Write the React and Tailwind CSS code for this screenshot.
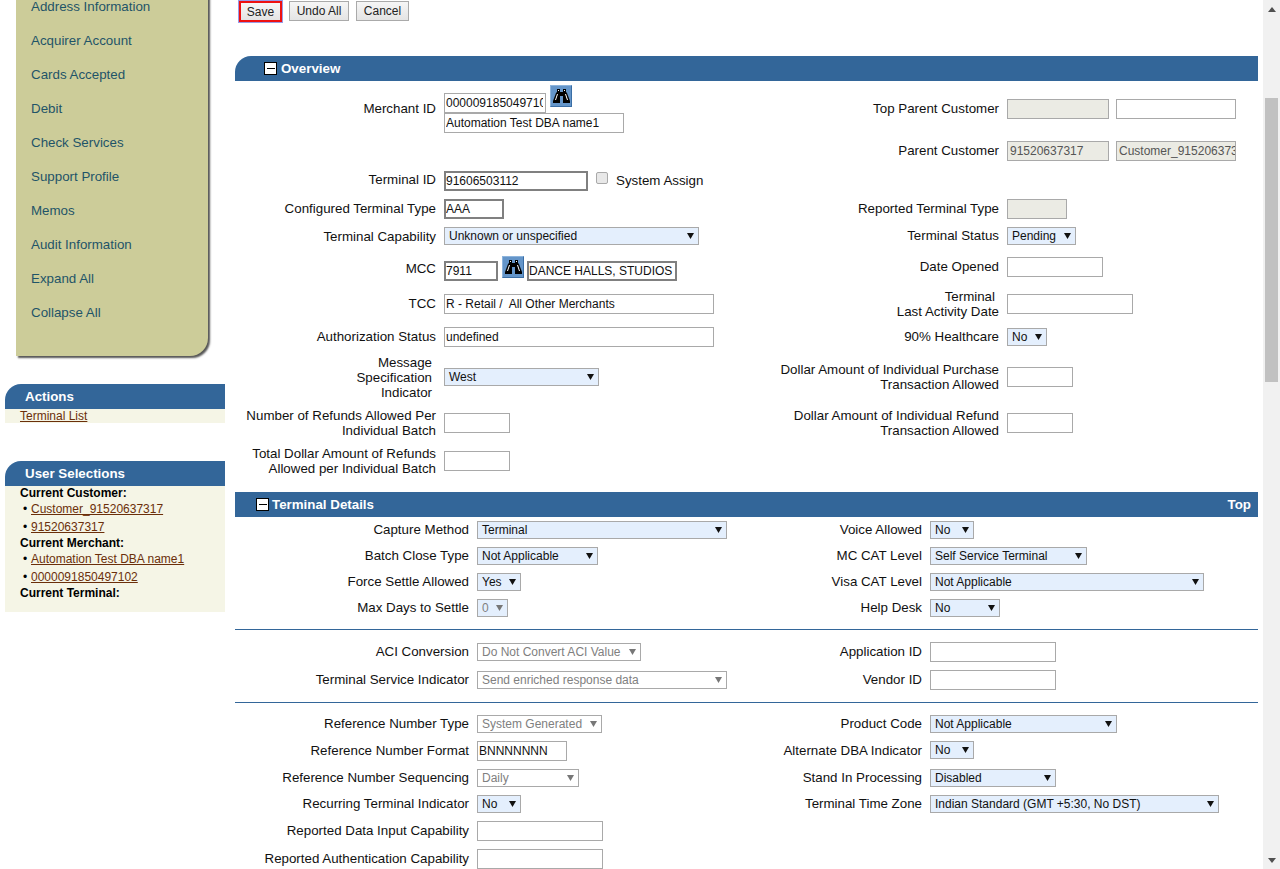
import React from "react";

const Caret = ({ dim }) => (
  <svg width="7" height="6" viewBox="0 0 7 6" className="shrink-0">
    <path d="M0 0h7L3.5 6z" fill={dim ? "#777" : "#111"} />
  </svg>
);

const Sel = ({ w, children, dim, plain }) => (
  <div className={`${w} h-[18px] shrink-0 flex items-center justify-between border border-[#a9a9a9] pl-[4px] pr-[4px] text-[12px] whitespace-nowrap overflow-hidden ${plain ? "bg-white" : "bg-[#e4effd]"} ${dim ? "text-[#808080]" : "text-[#111]"}`}>
    <span>{children}</span>
    <Caret dim={dim} />
  </div>
);

const Inp = ({ w, children, thick, dis }) => (
  <div className={`${w} h-[20px] shrink-0 flex items-center text-[12px] whitespace-nowrap overflow-hidden ${thick ? "border-2 border-[#808080] pl-0 pr-[1px]" : dis ? "border border-[#a9a9a9] pl-[2px] pr-0" : "border border-[#a9a9a9] pl-[1px] pr-[2px]"} ${dis ? "bg-[#ebebe4] text-[#555]" : "bg-white text-[#111]"}`}>
    <span className="block flex-1 overflow-hidden">{children}</span>
  </div>
);

const Lbl = ({ w, children, cls = "" }) => (
  <div className={`${w} shrink-0 text-right text-[13.33px] leading-[15px] text-[#111] whitespace-nowrap ${cls}`}>{children}</div>
);

const Bino = () => (
  <div className="w-[22px] h-[22px] shrink-0 bg-[#6495c9] border border-t-[#8db4dc] border-l-[#8db4dc] border-b-[#3a6ea5] border-r-[#3a6ea5] flex items-center justify-center">
    <svg width="17" height="14" viewBox="0 0 17 14">
      <path fill="#000" d="M4 0h3v3h3V0h3v3l1 1 3 8v2H10V7H7v7H0v-2l3-8 1-1z" />
      <path fill="none" stroke="#fff" strokeWidth="1" d="M4.5 5L2.5 11M12.5 5l2 6M5 1.5h1M11 1.5h1" />
    </svg>
  </div>
);

const Minus = () => (
  <span className="w-[13px] h-[13px] shrink-0 bg-white border border-black flex items-center justify-center">
    <span className="w-[8px] h-[1px] bg-black" />
  </span>
);

const Row = ({ h, mt = "", children, cls = "items-start" }) => (
  <div className={`flex ${h} ${mt} ${cls}`}>{children}</div>
);

const LeftO = ({ h, mt, label, lblCls = "-mt-[2px]", children }) => (
  <Row h={h} mt={mt} cls="items-center">
    <Lbl w="w-[201px]" cls={lblCls}>{label}</Lbl>
    <div className="ml-[8px] flex items-center">{children}</div>
  </Row>
);

const RightO = ({ h, mt, label, children, lblCls = "-mt-[2px]" }) => (
  <Row h={h} mt={mt} cls="items-center">
    <Lbl w="w-[219px]" cls={lblCls}>{label}</Lbl>
    <div className="ml-[8px] flex items-center">{children}</div>
  </Row>
);

const Pair = ({ h, mt = "", left, lc, right, rc, lp = "" }) => (
  <div className={`flex items-start ${h} ${mt}`}>
    <div className={`w-[234px] shrink-0 text-right text-[13.33px] leading-[17px] text-[#111] ${lp}`}>{left}</div>
    <div className="ml-[8px] w-[323px] shrink-0 flex">{lc}</div>
    {right ? <div className={`w-[122px] shrink-0 text-right text-[13.33px] leading-[17px] text-[#111] whitespace-nowrap flex justify-end ${lp}`}>{right}</div> : null}
    {right ? <div className="ml-[8px] flex">{rc}</div> : null}
  </div>
);

const menu = ["Address Information", "Acquirer Account", "Cards Accepted", "Debit", "Check Services", "Support Profile", "Memos", "Audit Information", "Expand All", "Collapse All"];

const A = ({ children }) => <a className="text-[#6b2f0a] underline underline-offset-1">{children}</a>;

const Bul = ({ children }) => (
  <div className="h-[18px] leading-[16px] pl-[3px] flex">
    <span className="w-[8px] shrink-0">•</span>
    <A>{children}</A>
  </div>
);

function Sidebar() {
  return (
    <aside className="w-[235px] shrink-0 pl-[5px]">
      <nav className="ml-[11px] w-[192px] h-[366px] -mt-[10px] bg-[#cccc99] rounded-br-[18px] shadow-[2px_2px_2px_#555]">
        {menu.map((m) => (
          <div key={m} className="h-[34px] pl-[15px] flex items-center text-[13.33px] text-[#1f5468]">{m}</div>
        ))}
      </nav>
      <section className="mt-[28px] w-[220px]">
        <h3 className="h-[25px] bg-[#336699] rounded-tl-[16px] pl-[20px] flex items-center text-[13.33px] font-bold text-white">Actions</h3>
        <div className="h-[14px] bg-[#f5f5e6] pl-[15px] text-[12px] leading-[14px]"><A>Terminal List</A></div>
      </section>
      <section className="mt-[38px] w-[220px]">
        <h3 className="h-[25px] bg-[#336699] rounded-tl-[16px] pl-[20px] flex items-center text-[13.33px] font-bold text-white">User Selections</h3>
        <div className="h-[126px] bg-[#f5f5e6] pl-[15px] text-[12px] text-black">
          <div className="font-bold h-[15px] leading-[14px]">Current Customer:</div>
          <Bul>Customer_91520637317</Bul>
          <div className="h-[17px]"><Bul>91520637317</Bul></div>
          <div className="font-bold h-[15px] leading-[14px]">Current Merchant:</div>
          <Bul>Automation Test DBA name1</Bul>
          <div className="h-[17px]"><Bul>0000091850497102</Bul></div>
          <div className="font-bold h-[14px] leading-[14px]">Current Terminal:</div>
        </div>
      </section>
    </aside>
  );
}

const Btn = ({ children, w, save }) => (
  <button className={`${w} flex items-center justify-center text-[12px] text-[#222] bg-gradient-to-b from-[#f6f6f6] to-[#e4e4e4] ${save ? "h-[21px] mt-[1px] border-[2px] border-[#ee1111] outline outline-1 outline-[#9a9ae6]" : "h-[20px] mt-[1px] border border-[#aaa]"}`}>{children}</button>
);

function Overview() {
  return (
    <div className="flex h-[411px]">
      <div className="w-[545px] shrink-0">
        <LeftO h="h-[40px]" mt="mt-[12px]" label="Merchant ID" lblCls="-mt-[10px]">
          <div>
            <div className="flex items-start">
              <Inp w="w-[102px]">0000091850497102</Inp>
              <div className="ml-[4px] -mt-[8px]"><Bino /></div>
            </div>
            <Inp w="w-[180px]">Automation Test DBA name1</Inp>
          </div>
        </LeftO>
        <LeftO h="h-[20px]" mt="mt-[38px]" label="Terminal ID" lblCls="-mt-[4px]">
          <Inp w="w-[144px]" thick>91606503112</Inp>
          <span className="ml-[8px] mb-[6px] w-[12px] h-[12px] rounded-[2px] border border-[#a9a9a9] bg-[#e8e8e8]" />
          <span className="ml-[8px] text-[13.33px] text-[#111]">System Assign</span>
        </LeftO>
        <LeftO h="h-[20px]" mt="mt-[8px]" label="Configured Terminal Type"><Inp w="w-[60px]" thick>AAA</Inp></LeftO>
        <LeftO h="h-[18px]" mt="mt-[8px]" label="Terminal Capability" lblCls=""><Sel w="w-[255px]">Unknown or unspecified</Sel></LeftO>
        <LeftO h="h-[20px]" mt="mt-[16px]" label="MCC" lblCls="-mt-[6px]">
          <Inp w="w-[54px]" thick>7911</Inp>
          <div className="ml-[4px] -mt-[8px]"><Bino /></div>
          <div className="ml-[3px]"><Inp w="w-[150px]" thick>DANCE HALLS, STUDIOS</Inp></div>
        </LeftO>
        <LeftO h="h-[20px]" mt="mt-[13px]" label="TCC"><Inp w="w-[270px]">R - Retail /&nbsp; All Other Merchants</Inp></LeftO>
        <LeftO h="h-[20px]" mt="mt-[13px]" label="Authorization Status"><Inp w="w-[270px]">undefined</Inp></LeftO>
        <Row h="h-[44px]" mt="mt-[9px]" cls="items-start">
          <Lbl w="w-[197px]" cls="-mt-[1px]">Message<br />Specification<br />Indicator</Lbl>
          <div className="ml-[12px] mt-[12px]"><Sel w="w-[155px]">West</Sel></div>
        </Row>
        <LeftO h="h-[20px]" mt="mt-[13px]" label={<>Number of Refunds Allowed Per<br />Individual Batch</>} lblCls=""><Inp w="w-[66px]" /></LeftO>
        <LeftO h="h-[20px]" mt="mt-[18px]" label={<>Total Dollar Amount of Refunds<br />Allowed per Individual Batch</>} lblCls=""><Inp w="w-[66px]" /></LeftO>
      </div>
      <div className="flex-1">
        <RightO h="h-[20px]" mt="mt-[18px]" label="Top Parent Customer">
          <Inp w="w-[102px]" dis /><div className="ml-[7px]"><Inp w="w-[120px]" /></div>
        </RightO>
        <RightO h="h-[20px]" mt="mt-[22px]" label="Parent Customer">
          <Inp w="w-[102px]" dis>91520637317</Inp><div className="ml-[7px]"><Inp w="w-[120px]" dis>Customer_91520637317</Inp></div>
        </RightO>
        <RightO h="h-[20px]" mt="mt-[38px]" label="Reported Terminal Type"><Inp w="w-[60px]" dis /></RightO>
        <RightO h="h-[19px]" mt="mt-[7px]" label="Terminal Status" lblCls=""><Sel w="w-[69px]">Pending</Sel></RightO>
        <RightO h="h-[20px]" mt="mt-[12px]" label="Date Opened"><Inp w="w-[96px]" /></RightO>
        <RightO h="h-[20px]" mt="mt-[17px]" label={<><span className="pr-[4px]">Terminal</span><br />Last Activity Date</>} lblCls=""><Inp w="w-[126px]" /></RightO>
        <RightO h="h-[18px]" mt="mt-[14px]" label="90% Healthcare"><Sel w="w-[40px]">No</Sel></RightO>
        <RightO h="h-[20px]" mt="mt-[21px]" label={<>Dollar Amount of Individual Purchase<br />Transaction Allowed</>} lblCls=""><Inp w="w-[66px]" /></RightO>
        <RightO h="h-[20px]" mt="mt-[26px]" label={<>Dollar Amount of Individual Refund<br />Transaction Allowed</>} lblCls=""><Inp w="w-[66px]" /></RightO>
      </div>
    </div>
  );
}

function Details() {
  return (
    <div>
      <div className="pt-[4px]">
        <Pair h="h-[26px]" left="Capture Method" lc={<Sel w="w-[250px]">Terminal</Sel>} right="Voice Allowed" rc={<Sel w="w-[44px]">No</Sel>} />
        <Pair h="h-[26px]" left="Batch Close Type" lc={<Sel w="w-[121px]">Not Applicable</Sel>} right="MC CAT Level" rc={<Sel w="w-[157px]">Self Service Terminal</Sel>} />
        <Pair h="h-[26px]" left="Force Settle Allowed" lc={<Sel w="w-[44px]">Yes</Sel>} right="Visa CAT Level" rc={<Sel w="w-[274px]">Not Applicable</Sel>} />
        <Pair h="h-[18px]" left="Max Days to Settle" lc={<Sel w="w-[31px]" dim>0</Sel>} right="Help Desk" rc={<Sel w="w-[70px]">No</Sel>} />
      </div>
      <hr className="mt-[12px] border-t border-[#336699]" />
      <div className="pt-[13px]">
        <Pair h="h-[28px]" left="ACI Conversion" lc={<Sel w="w-[164px]" dim plain>Do Not Convert ACI Value</Sel>} right="Application ID" rc={<div className="-mt-[1px]"><Inp w="w-[126px]" /></div>} />
        <Pair h="h-[18px]" left="Terminal Service Indicator" lc={<Sel w="w-[250px]" dim plain>Send enriched response data</Sel>} right="Vendor ID" rc={<div className="-mt-[1px]"><Inp w="w-[126px]" /></div>} />
      </div>
      <hr className="mt-[13px] border-t border-[#336699]" />
      <div className="pt-[12px]">
        <Pair h="h-[26px]" left="Reference Number Type" lc={<Sel w="w-[125px]" dim plain>System Generated</Sel>} right="Product Code" rc={<Sel w="w-[187px]">Not Applicable</Sel>} />
        <Pair h="h-[28px]" lp="pt-[1px]" left="Reference Number Format" lc={<Inp w="w-[90px]">BNNNNNNN</Inp>} right="Alternate DBA Indicator" rc={<Sel w="w-[44px]">No</Sel>} />
        <Pair h="h-[26px]" left="Reference Number Sequencing" lc={<Sel w="w-[102px]" dim plain>Daily</Sel>} right="Stand In Processing" rc={<Sel w="w-[126px]">Disabled</Sel>} />
        <Pair h="h-[26px]" left="Recurring Terminal Indicator" lc={<Sel w="w-[44px]">No</Sel>} right="Terminal Time Zone" rc={<Sel w="w-[289px]">Indian Standard (GMT +5:30, No DST)</Sel>} />
        <Pair h="h-[28px]" lp="pt-[1px]" left="Reported Data Input Capability" lc={<Inp w="w-[126px]" />} />
        <Pair h="h-[20px]" lp="pt-[1px]" left="Reported Authentication Capability" lc={<Inp w="w-[126px]" />} />
      </div>
    </div>
  );
}

export default function App() {
  return (
    <div className="w-[1280px] h-[869px] overflow-hidden flex bg-white font-['Liberation_Sans',Arial,sans-serif]">
      <Sidebar />
      <main className="w-[1023px] shrink-0">
        <div className="flex items-start gap-[7px] pl-[4px] h-[56px]">
          <Btn w="w-[43px]" save>Save</Btn>
          <Btn w="w-[60px]">Undo All</Btn>
          <Btn w="w-[53px]">Cancel</Btn>
        </div>
        <h2 className="h-[25px] bg-[#336699] rounded-tl-[16px] pl-[29px] flex items-center gap-[4px] text-[13.33px] font-bold text-white"><Minus />Overview</h2>
        <Overview />
        <h2 className="h-[25px] bg-[#336699] pl-[21px] pr-[7px] flex items-center gap-[3px] text-[13.33px] font-bold text-white"><Minus />Terminal Details<span className="ml-auto">Top</span></h2>
        <Details />
      </main>
      <div className="w-[5px] shrink-0" />
      <div className="w-[17px] shrink-0 bg-[#f1f1f1] flex flex-col items-center">
        <svg width="8" height="5" viewBox="0 0 8 5" className="mt-[7px] shrink-0"><path d="M4 0l4 5H0z" fill="#505050" /></svg>
        <div className="w-[13px] h-[284px] bg-[#c1c1c1] mt-[86px] shrink-0" />
        <svg width="8" height="5" viewBox="0 0 8 5" className="mt-[476px] shrink-0"><path d="M0 0h8L4 5z" fill="#505050" /></svg>
      </div>
    </div>
  );
}
